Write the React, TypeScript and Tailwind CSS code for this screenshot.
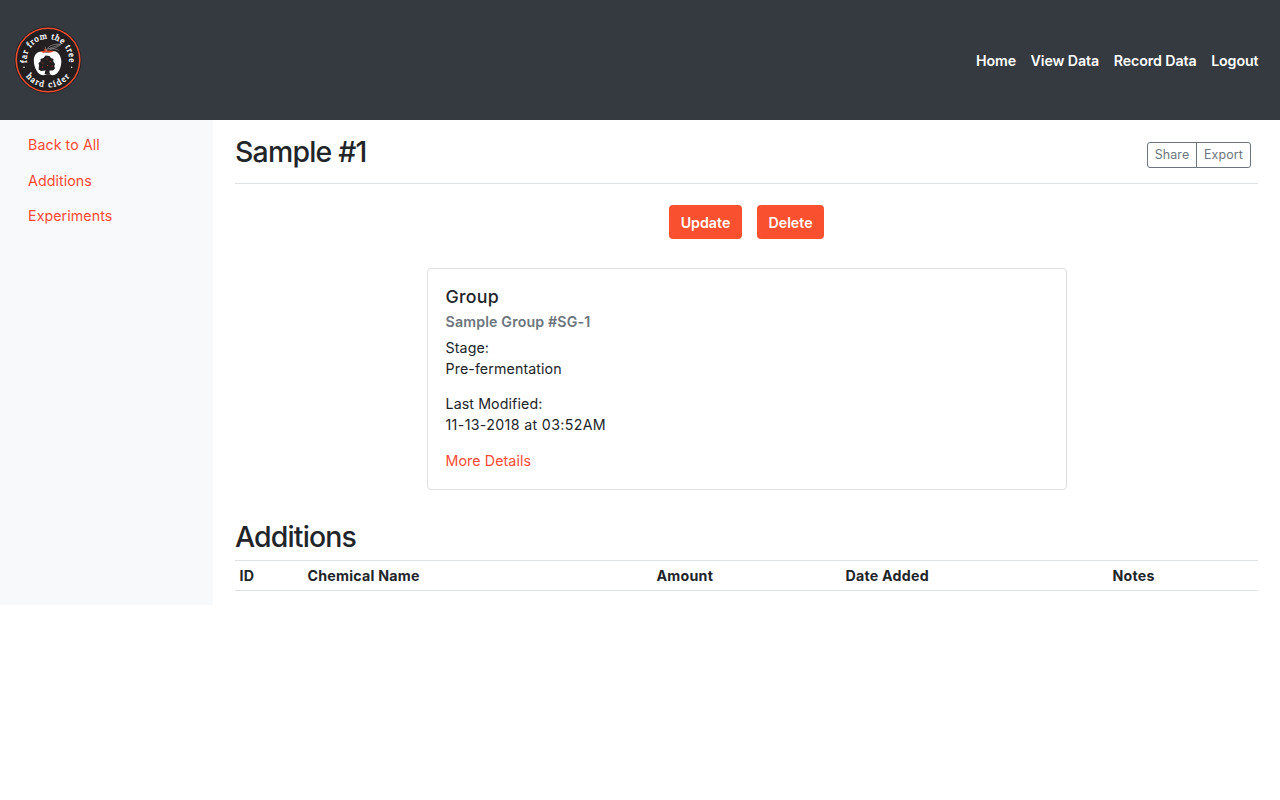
function Logo() {
  return (
    <svg viewBox="0 0 68 68" className="block h-[68px] w-[68px]" role="img">
      <defs>
        <path id="arc-long" d="M15.5 44.600 A21.3 21.3 0 1 1 52.500 44.600" />
        <path id="arc-bottom" d="M6.600 34 A27.4 27.4 0 0 0 61.4 34" />
      </defs>
      <circle cx="34" cy="34" r="33.4" fill="#231f20" />
      <circle cx="34" cy="34" r="31.8" fill="none" stroke="#ee4d2f" strokeWidth="1.5" />
      <g fill="#fff" stroke="#fff" strokeWidth="0.3" fontFamily="'Liberation Serif', serif" fontSize="9">
        <text textAnchor="middle" letterSpacing="0.8">
          <textPath href="#arc-long" startOffset="50%">far from the tree</textPath>
        </text>
        <text textAnchor="middle" letterSpacing="1.55">
          <textPath href="#arc-bottom" startOffset="50.5%">hard cider</textPath>
        </text>
      </g>
      <circle cx="10" cy="41.2" r="0.8" fill="#e8e8e8" />
      <circle cx="57.600" cy="41.2" r="0.8" fill="#e8e8e8" />
      <path d="M32 26.500 C26 23.500 20 27 19.800 34 C19.800 42 24 49.200 29 49.200 C31 49.200 32.500 48 34 48 C36 48 37 49.200 39 49.200 C44 49 48 41 47.200 34 C46 26 40 23 35 26.500 Z" fill="#fff" />
      <path d="M31.500 29.500 L35.500 30 L37 32 L39.500 33 L39.300 35.500 L41 38 L40.300 40 L41 42.500 L39 44.500 L35.500 44.500 L35.500 47 L36.500 48 L30.500 48 L31.500 44.500 L27 45 L24.600 43.500 L25 39.500 L24.500 37 L26.500 35.500 L26.500 33 L29.500 32 Z" fill="#231f20" />
      <g fill="#c43b2b">
        <circle cx="29" cy="37" r="0.6" /><circle cx="33" cy="33" r="0.6" />
        <circle cx="36.500" cy="35.500" r="0.6" /><circle cx="33.500" cy="39.500" r="0.6" />
        <circle cx="28.500" cy="41" r="0.6" /><circle cx="38" cy="40" r="0.6" />
      </g>
      <path d="M26.500 25.500 L31 24.600 L29.500 22.500 L32.500 23.500 L33.500 24.500 L40.500 25 L36 26.800 L33 26 L29.500 27 Z" fill="#dd472e" />
      <path d="M32.500 24.500 C34 19.500 40 17.800 47 18.300 C42 22.500 38 23 34.500 23 M34 23 L46 18.500 M36 23.500 C39 22 43 23 45 24.500 M32.500 25 L31 20.500" fill="none" stroke="#aaa" strokeWidth="0.55" />
    </svg>
  );
}

const navLinks = ["Home", "View Data", "Record Data", "Logout"];
const sideLinks = ["Back to All", "Additions", "Experiments"];

export default function App() {
  return (
    <div className="min-h-[800px] bg-white font-['Inter',sans-serif] text-[14.22px] leading-[21.33px] text-[#212529]">
      <header className="flex h-[120px] items-center justify-between bg-[#343a40] pr-[21.500px] pl-[14px]">
        <Logo />
        <nav className="flex gap-[14.600px] pt-[2px] font-semibold tracking-[-0.1px] text-white">
          {navLinks.map((label) => (
            <a key={label} href="#">{label}</a>
          ))}
        </nav>
      </header>
      <div className="flex h-[485px]">
        <aside className="w-[213px] shrink-0 bg-[#f8f9fa] pt-[14.220px] pl-[28px]">
          <ul className="flex flex-col gap-[14.220px] tracking-[0.08px] text-[#f84a33]">
            {sideLinks.map((label) => (
              <li key={label}><a href="#">{label}</a></li>
            ))}
          </ul>
        </aside>
        <main className="min-w-0 flex-1 pr-[22px] pl-[22px]">
          <div className="flex h-[64px] items-start justify-between border-b border-[#dee2e6] pt-[14px]">
            <h1 className="text-[28.44px] leading-[36px] font-medium tracking-[-0.8px]">Sample #1</h1>
            <div className="mt-[8px] mr-[7px] flex h-[26px] rounded-[3px] border border-[#6c757d] text-[12.440px] leading-[24px] text-[#6c757d]">
              <button className="w-[49px] border-r border-[#6c757d] tracking-[0.1px]">Share</button>
              <button className="w-[53px] tracking-[0.1px]">Export</button>
            </div>
          </div>
          <div className="mt-[21px] flex justify-center gap-[15px] font-semibold text-white">
            <button className="h-[34px] w-[73px] rounded-[4px] bg-[#f95030] pt-[2px]">Update</button>
            <button className="h-[34px] w-[67px] rounded-[4px] bg-[#f95030] pt-[2px]">Delete</button>
          </div>
          <section className="mx-auto mt-[29px] h-[222px] w-[640px] rounded-[4px] border border-[#dfdfdf] pt-[17px] pl-[18px]">
            <h2 className="text-[17.780px] leading-[21px] font-medium tracking-[0.25px]">Group</h2>
            <h3 className="mt-[6px] leading-[17px] font-semibold tracking-[0.15px] text-[#6c757d]">Sample Group #SG-1</h3>
            <p className="mt-[7px] tracking-[0.1px]">Stage:<br />Pre-fermentation</p>
            <p className="mt-[13.500px] tracking-[0.1px]">Last Modified:<br /><span className="tracking-[0.34px]">11-13-2018 at 03:52AM</span></p>
            <a href="#" className="mt-[14.220px] block tracking-[0.1px] text-[#f84a33]">More Details</a>
          </section>
          <h1 className="mt-[30px] text-[28.440px] leading-[34px] font-medium tracking-[-0.85px]">Additions</h1>
          <table className="mt-[6px] w-full table-fixed border-separate border-spacing-0 border-y border-[#dee2e6] text-left tracking-[0.23px]">
            <thead>
              <tr className="h-[29px]">
                <th className="w-[68px] pt-px pl-[4.500px] font-bold">ID</th>
                <th className="w-[349px] pt-px pl-[4.500px] font-bold">Chemical Name</th>
                <th className="w-[189px] pt-px pl-[4.500px] font-bold">Amount</th>
                <th className="w-[267px] pt-px pl-[4.500px] font-bold">Date Added</th>
                <th className="pt-px pl-[4.500px] font-bold">Notes</th>
              </tr>
            </thead>
          </table>
        </main>
      </div>
    </div>
  );
}
